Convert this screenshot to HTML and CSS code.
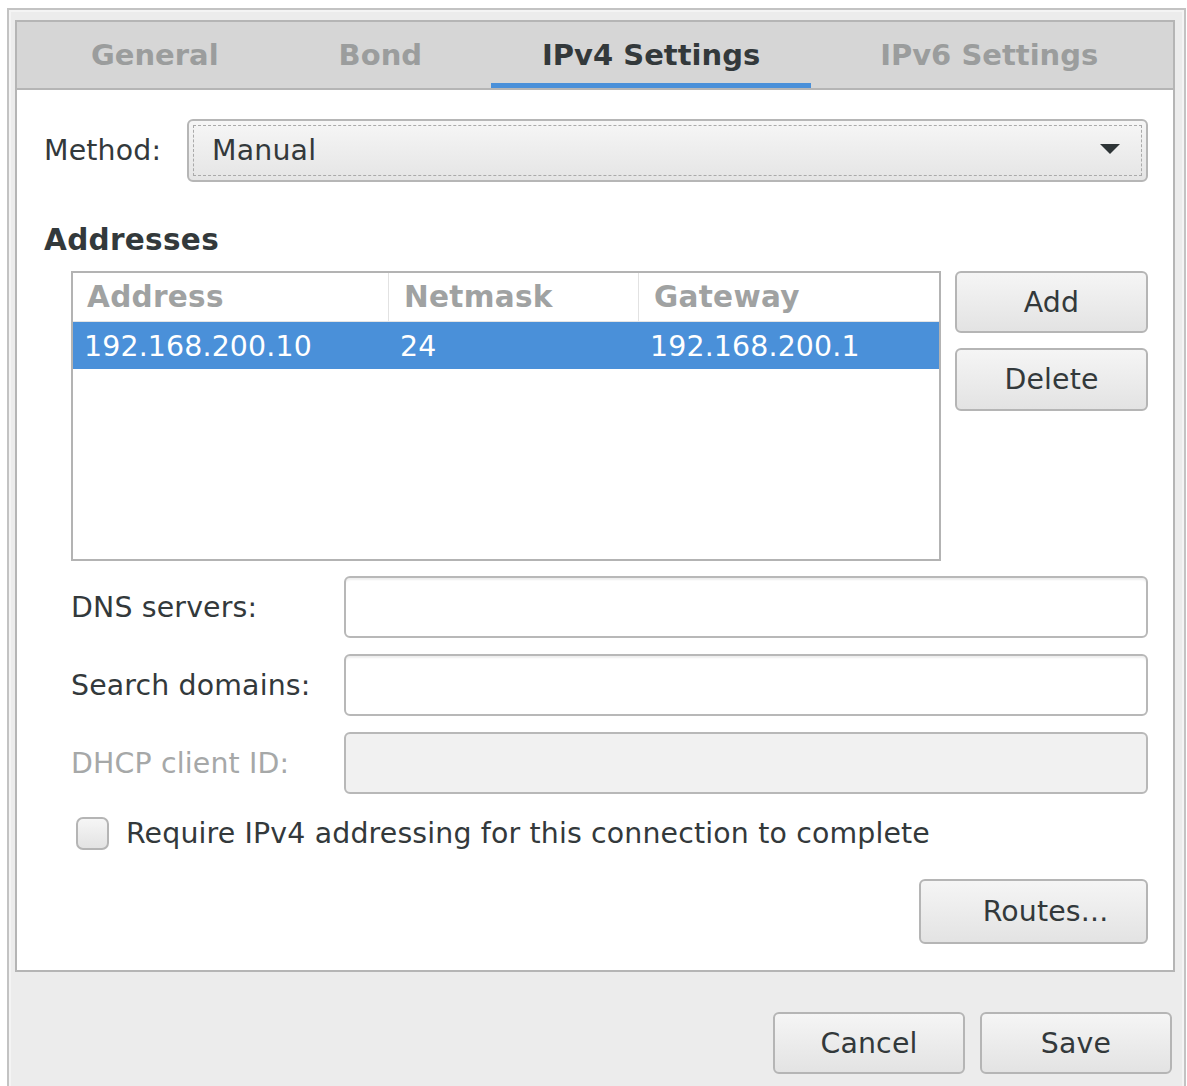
FILE: index.html
```html
<!DOCTYPE html>
<html lang="en">
<head>
<meta charset="utf-8">
<title>Editing bond0</title>
<link rel="stylesheet" href="styles.css">
</head>
<body>
<div class="window">
  <div class="notebook">
    <div class="tabs">
      <div class="tab">General</div>
      <div class="tab">Bond</div>
      <div class="tab active">IPv4 Settings</div>
      <div class="tab">IPv6 Settings</div>
    </div>
    <div class="page">
      <div class="method-row">
        <span class="label">Method:</span>
        <div class="combo">
          <div class="combo-inner">
            <span>Manual</span>
            <span class="arrow"></span>
          </div>
        </div>
      </div>

      <div class="section-title">Addresses</div>

      <div class="section-body">
        <div class="addresses">
          <div class="tree">
            <div class="tree-head">
              <div class="cell c1">Address</div>
              <div class="cell c2">Netmask</div>
              <div class="cell c3">Gateway</div>
            </div>
            <div class="tree-row selected">
              <div class="cell c1">192.168.200.10</div>
              <div class="cell c2">24</div>
              <div class="cell c3">192.168.200.1</div>
            </div>
          </div>
          <div class="side-buttons">
            <button class="btn add">Add</button>
            <button class="btn delete">Delete</button>
          </div>
        </div>

        <div class="fields">
          <span class="label">DNS servers:</span>
          <div class="entry"></div>
          <span class="label">Search domains:</span>
          <div class="entry"></div>
          <span class="label disabled">DHCP client ID:</span>
          <div class="entry insensitive"></div>
        </div>

        <div class="check-row">
          <span class="checkbox"></span>
          <span class="check-label">Require IPv4 addressing for this connection to complete</span>
        </div>
      </div>

      <div class="routes-row">
        <button class="btn routes">Routes...</button>
      </div>
    </div>
  </div>

  <div class="actions">
    <button class="btn action">Cancel</button>
    <button class="btn action">Save</button>
  </div>
</div>
</body>
</html>
```

FILE: styles.css
```css
* {
  box-sizing: border-box;
}

html, body {
  margin: 0;
  padding: 0;
  background: #ffffff;
  overflow: hidden;
}

body {
  font-family: "DejaVu Sans", "Liberation Sans", sans-serif;
  font-size: 28.4px;
  letter-spacing: 0.15px;
  color: #33393b;
}

/* dialog window */
.window {
  margin: 8px 0 0 7px;
  width: 1179px;
  height: 1100px;
  background: #ececec;
  border: 2px solid #c3c3c3;
  border-bottom: none;
  box-shadow: inset 2px 2px 0 #f4f4f4, inset -2px 0 0 #f4f4f4;
  padding: 10px 9px 0 6px;
}

/* notebook */
.notebook {
  width: 1160px;
  border: 2px solid #b5b5b5;
  background: #ffffff;
}

.tabs {
  display: flex;
  height: 68px;
  background: #d6d6d6;
  border-bottom: 2px solid #b5b5b5;
  padding-left: 14px;
}

.tab {
  margin: 0 9px;
  padding: 0 51px;
  height: 66px;
  line-height: 66px;
  font-weight: bold;
  font-size: 29px;
  letter-spacing: 0;
  color: #9b9d9d;
  white-space: nowrap;
}

.tab.active {
  color: #33393b;
  box-shadow: inset 0 -5px 0 #4a90d9;
}

.page {
  padding: 29px 25px 26px 27px;
}

/* method combo */
.method-row {
  display: flex;
  align-items: center;
  gap: 26px;
  height: 63px;
}

.combo {
  flex: 1;
  height: 63px;
  border: 2px solid #b6b6b6;
  border-radius: 6px;
  background: linear-gradient(#f6f6f6, #e5e5e5);
  padding: 4px;
}

.combo-inner {
  height: 100%;
  border: 1px dashed #aaaaaa;
  display: flex;
  align-items: center;
  justify-content: space-between;
  padding: 0 21px 0 18px;
}

.arrow {
  width: 0;
  height: 0;
  border-left: 10px solid transparent;
  border-right: 10px solid transparent;
  border-top: 10px solid #2e3436;
  margin-top: -4px;
}

.section-title {
  margin-top: 41px;
  line-height: 34px;
  font-weight: bold;
  font-size: 29.5px;
  letter-spacing: 0.3px;
}

.section-body {
  margin-left: 27px;
}

/* addresses list */
.addresses {
  margin-top: 14px;
  display: flex;
  gap: 14px;
}

.tree {
  width: 870px;
  height: 290px;
  border: 2px solid #b3b3b3;
  background: #ffffff;
}

.tree-head,
.tree-row {
  display: flex;
}

.cell.c1 { width: 315px; }
.cell.c2 { width: 250px; }
.cell.c3 { flex: 1; }

.tree-head .cell {
  height: 49px;
  line-height: 49px;
  font-weight: bold;
  font-size: 29.5px;
  letter-spacing: 0.3px;
  color: #a0a2a2;
  padding-left: 14px;
  border-bottom: 1px solid #e4e4e4;
}

.tree-head .cell.c2,
.tree-head .cell.c3 {
  border-left: 1px solid #e2e2e2;
  padding-left: 15px;
}

.tree-row .cell {
  height: 47px;
  line-height: 49px;
  padding-left: 12px;
}

.tree-row .cell.c1 {
  padding-left: 11px;
}

.tree-row.selected {
  background: #4a90d9;
  color: #ffffff;
}

.side-buttons {
  display: flex;
  flex-direction: column;
  gap: 15px;
  width: 193px;
}

/* buttons */
.btn {
  font-family: inherit;
  font-size: 28.4px;
  letter-spacing: 0.15px;
  color: #33393b;
  border: 2px solid #b5b5b5;
  border-radius: 6px;
  background: linear-gradient(#f5f5f5, #e3e3e3);
  padding: 0;
  margin: 0;
}

.btn.add { height: 62px; }
.btn.delete { height: 63px; }

/* entries */
.fields {
  margin-top: 15px;
  display: grid;
  grid-template-columns: 273px 1fr;
  row-gap: 16px;
  align-items: center;
}

.label {
  white-space: nowrap;
}

.label.disabled {
  color: #a6a8a8;
}

.entry {
  height: 62px;
  border: 2px solid #b8b8b8;
  border-radius: 6px;
  background: #ffffff;
  box-shadow: inset 0 3px 2px -1px rgba(0, 0, 0, 0.07);
}

.entry.insensitive {
  background: #f1f1f1;
  box-shadow: none;
}

/* checkbox */
.check-row {
  margin-top: 23px;
  height: 33px;
  display: flex;
  align-items: center;
}

.checkbox {
  width: 33px;
  height: 33px;
  margin-left: 5px;
  border: 2px solid #b5b5b5;
  border-radius: 7px;
  background: linear-gradient(#f6f6f6, #e3e3e3);
}

.check-label {
  margin-left: 17px;
  white-space: nowrap;
}

.routes-row {
  margin-top: 29px;
  display: flex;
  justify-content: flex-end;
}

.btn.routes {
  width: 229px;
  height: 65px;
  padding-left: 24px;
}

/* dialog action area */
.actions {
  margin-top: 40px;
  display: flex;
  justify-content: flex-end;
  gap: 15px;
  padding-right: 3px;
}

.btn.action {
  width: 192px;
  height: 62px;
}
```
